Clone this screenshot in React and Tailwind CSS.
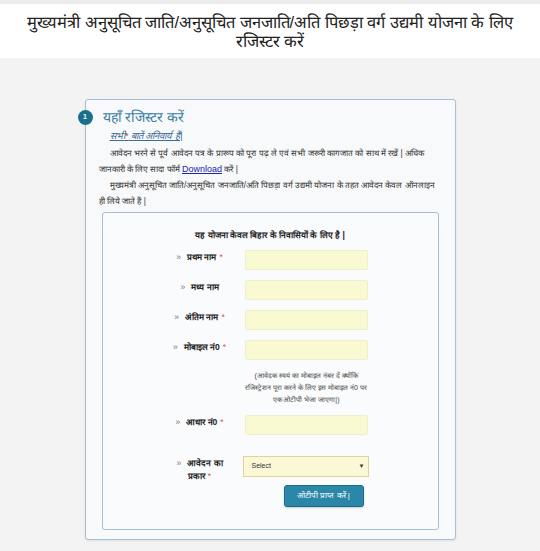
import React from "react";

const fields = [
  { label: "प्रथम नाम", req: true },
  { label: "मध्य नाम", req: false },
  { label: "अंतिम नाम", req: true },
  { label: "मोबाइल नं0", req: true },
];

const Label = ({ children, req }) => (
  <div className="w-[88px] pt-[1px] text-center text-[8.5px] font-bold leading-[12px] text-[#222]">
    <span className="mr-[6px] font-normal text-[#777]">»</span>
    {children}
    {req && <span className="ml-[3px] font-normal text-[#d9534f]">*</span>}
  </div>
);

const App = () => {
  return (
    <div className="min-h-[551px] w-full bg-[#f3f3f3] font-['Liberation_Sans',sans-serif]">
      <div className="h-[4px] bg-[#ececec]" />
      <div className="h-[54px] bg-white pt-[9px] text-center text-[16.5px] leading-[19px] text-[#222]">
        मुख्यमंत्री अनुसूचित जाति/अनुसूचित जनजाति/अति पिछड़ा वर्ग उद्यमी योजना के लिए
        <br />
        रजिस्टर करें
      </div>

      <div className="pt-[41px]">
        <div className="relative mx-auto w-[371px] rounded-[3px] border border-[#a8bed4] bg-[#f8f9fa] pb-[9px] shadow-[0_1px_3px_rgba(0,0,0,0.08)]">
          <div className="absolute left-[-8px] top-[10px] flex h-[15px] w-[15px] items-center justify-center rounded-full bg-[#1b6f8d] text-[7px] font-bold text-white">
            1
          </div>
          <div className="px-[13px] pt-[7px]">
            <div className="pl-[4px] text-[14px] leading-[20px] text-[#3a7ea3]">यहाँ रजिस्टर करें</div>
            <div className="mt-[1px] pl-[11px] text-[9.5px] leading-[16px] italic text-[#3d6c95] underline">
              सभी<span className="text-[#d9534f]">*</span> बातें अनिवार्य हैं|
            </div>
            <p className="mt-[1px] indent-[11px] text-[8.3px] leading-[16px] text-[#333]">
              आवेदन भरने से पूर्व आवेदन पत्र के प्रारूप को पूरा पढ़ ले एवं सभी जरूरी कागजात को साथ में रखें | अधिक
              जानकारी के लिए सादा फॉर्म{" "}
              <a href="#" className="text-[9px] leading-[12px] text-[#2222aa] underline">
                Download
              </a>{" "}
              करें |
            </p>
            <p className="indent-[11px] text-[8.3px] leading-[16px] text-[#333]">
              मुख्यमंत्री अनुसूचित जाति/अनुसूचित जनजाति/अति पिछड़ा वर्ग उद्यमी योजना के तहत आवेदन केवल ऑनलाइन
              ही लिये जाते हैं |
            </p>
          </div>

          <div className="mx-[16px] mt-[3px] rounded-[3px] border border-[#a8bed4] bg-[#fafbfc] pb-[22px] pt-[16px]">
            <div className="text-center text-[8.5px] font-bold leading-[12px] text-[#222]">
              यह योजना केवल बिहार के निवासियों के लिए है |
            </div>

            <div className="mt-[9px] flex flex-col gap-[10px] pl-[53px]">
              {fields.map((f) => (
                <div key={f.label} className="flex items-start">
                  <Label req={f.req}>{f.label}</Label>
                  <input
                    type="text"
                    className="ml-[1px] h-[20px] w-[123px] rounded-[2px] border border-[#efefd0] bg-[#fafad2] outline-none"
                  />
                </div>
              ))}
            </div>

            <div className="ml-[139px] mt-[10px] w-[129px] text-center text-[7px] leading-[12px] text-[#444]">
              (आवेदक स्वयं का मोबाइल नंबर दें क्योंकि रजिस्ट्रेशन पूरा करने के लिए इस मोबाइल नं0 पर एक ओटीपी भेजा जाएगा|)
            </div>

            <div className="mt-[9px] flex items-start pl-[53px]">
              <Label req>आधार नं0</Label>
              <input
                type="text"
                className="ml-[1px] h-[20px] w-[123px] rounded-[2px] border border-[#efefd0] bg-[#fafad2] outline-none"
              />
            </div>

            <div className="mt-[21px] flex h-[21px] items-start pl-[53px]">
              <div className="w-[88px] px-[20px] pt-[1px] text-center text-[8.5px] font-bold leading-[13px] text-[#222]">
                <span className="mr-[6px] font-normal text-[#777]">»</span>
                आवेदन का प्रकार
                <span className="ml-[3px] font-normal text-[#d9534f]">*</span>
              </div>
              <div className="ml-[-1px] flex h-[21px] w-[126px] items-center justify-between border border-[#e3d39a] bg-[#fbf8d6] pl-[8px] pr-[3px] text-[7px] text-[#333]">
                <span>Select</span>
                <span className="text-[6px]">▼</span>
              </div>
            </div>

            <div className="mt-[8px] flex pl-[181px]">
              <button className="h-[22px] w-[80px] rounded-[3px] border border-[#1d6c88] bg-[#2b87a8] text-[8px] leading-[12px] text-white shadow-[0_1px_2px_rgba(0,0,0,0.2)]">
                ओटीपी प्राप्त करें |
              </button>
            </div>
          </div>
        </div>
      </div>
    </div>
  );
};

export default App;
